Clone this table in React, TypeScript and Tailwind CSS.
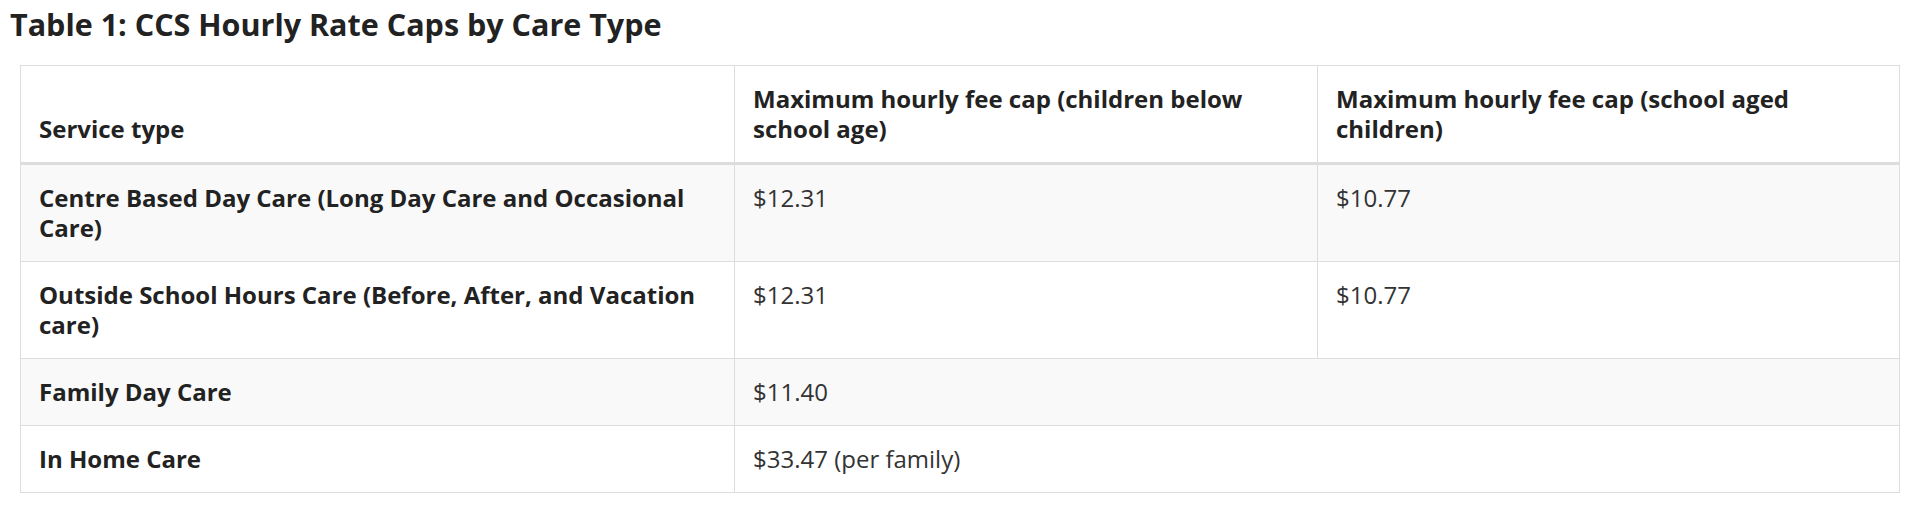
const ROWS: { name: string; below: string; school?: string }[] = [
  {
    name: "Centre Based Day Care (Long Day Care and Occasional Care)",
    below: "$12.31",
    school: "$10.77",
  },
  {
    name: "Outside School Hours Care (Before, After, and Vacation care)",
    below: "$12.31",
    school: "$10.77",
  },
  { name: "Family Day Care", below: "$11.40" },
  { name: "In Home Care", below: "$33.47 (per family)" },
];

const cell = "border border-[#dddddd] px-[18px] py-[18px] align-top";
const head = "border border-b-[3px] border-[#dddddd] px-[18px] py-[18px] align-bottom font-bold";

export default function App() {
  return (
    <div className="min-h-screen bg-white pl-[10px] pt-[4px] font-['Open_Sans',sans-serif] text-[#222222]">
      <h2 className="text-[30.5px] font-bold leading-[40px]">
        Table 1: CCS Hourly Rate Caps by Care Type
      </h2>

      <table className="mt-[21px] ml-[10px] w-[1880px] table-fixed border-collapse text-left text-[24px] leading-[30px]">
        <colgroup>
          <col className="w-[714px]" />
          <col className="w-[583px]" />
          <col />
        </colgroup>
        <thead>
          <tr>
            <th className={head}>Service type</th>
            <th className={head}>Maximum hourly fee cap (children below school age)</th>
            <th className={head}>Maximum hourly fee cap (school aged children)</th>
          </tr>
        </thead>
        <tbody>
          {ROWS.map((row, i) => (
            <tr key={row.name} className={i % 2 === 0 ? "bg-[#f9f9f9]" : "bg-white"}>
              <td className={`${cell} font-bold`}>{row.name}</td>
              {row.school ? (
                <>
                  <td className={`${cell} text-[#333333]`}>{row.below}</td>
                  <td className={`${cell} text-[#333333]`}>{row.school}</td>
                </>
              ) : (
                <td colSpan={2} className={`${cell} text-[#333333]`}>
                  {row.below}
                </td>
              )}
            </tr>
          ))}
        </tbody>
      </table>
    </div>
  );
}
